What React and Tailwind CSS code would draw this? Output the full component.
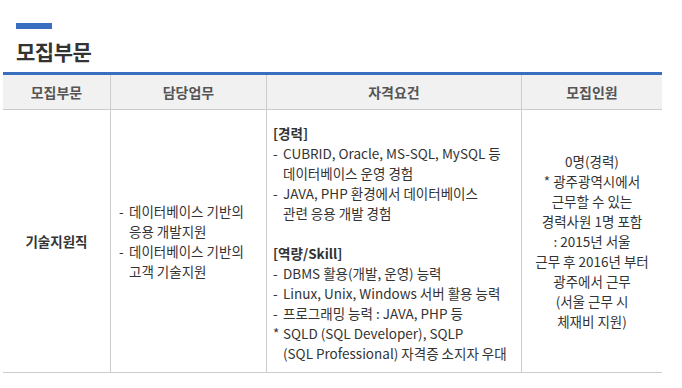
import React from 'react';

const font = { fontFamily: '"Noto Sans CJK KR", "Noto Sans", sans-serif' };

// 자격요건 항목: 대시 + 들여쓰기
const Item = ({ mark = '-', children }) => (
  <div className="flex">
    <span className="w-[10px] shrink-0">{mark}</span>
    <span>{children}</span>
  </div>
);

const App = () => {
  return (
    <div className="w-[682px] h-[388px] bg-white text-[#333]" style={font}>
      <div className="pt-[23px] pl-[16px]">
        <div className="w-[36px] h-[6px] bg-[#3a6fbf]" />
        <h2 className="mt-[8px] text-[21px] font-bold leading-[28px] text-[#333] tracking-[-0.5px]">모집부문</h2>
      </div>

      <div className="mt-[7px] ml-[3px] w-[659px] border-t-[3px] border-[#3a6fbf]">
        {/* 헤더 */}
        <div className="grid grid-cols-[107px_156px_255px_141px] h-[35px] bg-[#f1f1f1] border-b border-[#cccccc] text-[14px] font-bold text-[#555]">
          <div className="flex items-center justify-center">모집부문</div>
          <div className="flex items-center justify-center border-l border-[#cccccc]">담당업무</div>
          <div className="flex items-center justify-center border-l border-[#cccccc]">자격요건</div>
          <div className="flex items-center justify-center border-l border-[#cccccc]">모집인원</div>
        </div>

        {/* 본문 */}
        <div className="grid grid-cols-[107px_156px_255px_141px] h-[263px] border-b border-[#cccccc] text-[13.5px] leading-[20px]">
          <div className="flex items-center justify-center font-bold">기술지원직</div>
          <div className="flex flex-col justify-center border-l border-[#cccccc] pl-[8px]">
            <Item>데이터베이스 기반의<br />응용 개발지원</Item>
            <Item>데이터베이스 기반의<br />고객 기술지원</Item>
          </div>
          <div className="border-l border-[#cccccc] pl-[6px] pt-[13px]">
            <div className="font-bold">[경력]</div>
            <Item>CUBRID, Oracle, MS-SQL, MySQL 등<br />데이터베이스 운영 경험</Item>
            <Item>JAVA, PHP 환경에서 데이터베이스<br />관련 응용 개발 경험</Item>
            <div className="h-[20px]" />
            <div className="font-bold">[역량/Skill]</div>
            <Item>DBMS 활용(개발, 운영) 능력</Item>
            <Item>Linux, Unix, Windows 서버 활용 능력</Item>
            <Item>프로그래밍 능력 : JAVA, PHP 등</Item>
            <Item mark="*">SQLD (SQL Developer), SQLP<br />(SQL Professional) 자격증 소지자 우대</Item>
          </div>
          <div className="flex flex-col justify-center items-center text-center border-l border-[#cccccc]">
            <div>0명(경력)</div>
            <div>* 광주광역시에서</div>
            <div>근무할 수 있는</div>
            <div>경력사원 1명 포함</div>
            <div>: 2015년 서울</div>
            <div>근무 후 2016년 부터</div>
            <div>광주에서 근무</div>
            <div>(서울 근무 시</div>
            <div>체재비 지원)</div>
          </div>
        </div>
      </div>
    </div>
  );
};

export default App;
